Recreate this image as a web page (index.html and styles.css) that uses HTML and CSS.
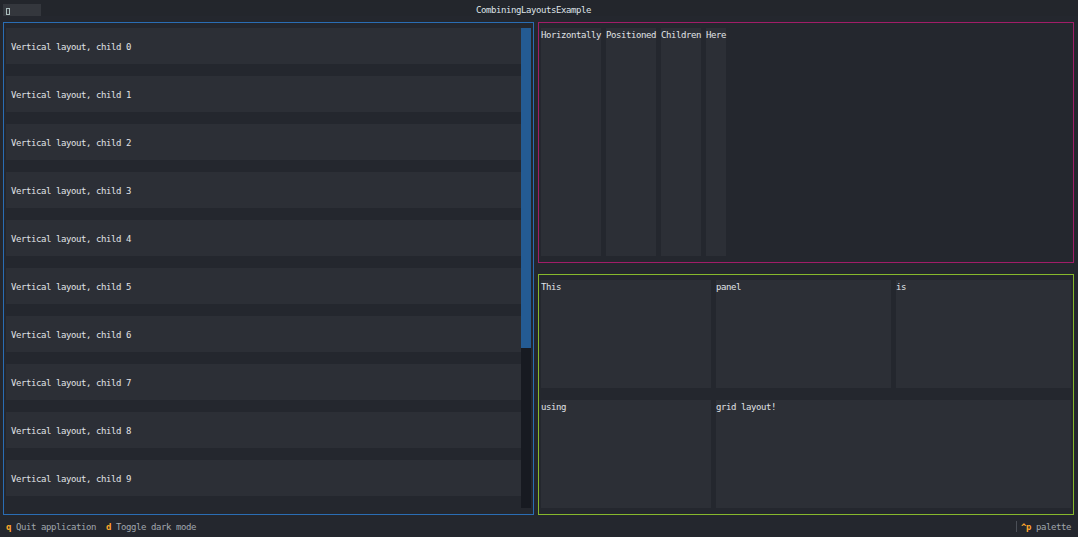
FILE: index.html
```html
<!DOCTYPE html>
<html>
<head>
<meta charset="utf-8">
<title>CombiningLayoutsExample</title>
<link rel="stylesheet" href="styles.css">
</head>
<body>
<div class="app">
  <header class="header">
    <div class="icon"><span class="icon-glyph"></span></div>
    <div class="title">CombiningLayoutsExample</div>
  </header>
  <main class="main">
    <section class="panel panel-left">
      <div class="list">
        <div class="item">Vertical layout, child 0</div>
        <div class="item">Vertical layout, child 1</div>
        <div class="item">Vertical layout, child 2</div>
        <div class="item">Vertical layout, child 3</div>
        <div class="item">Vertical layout, child 4</div>
        <div class="item">Vertical layout, child 5</div>
        <div class="item">Vertical layout, child 6</div>
        <div class="item">Vertical layout, child 7</div>
        <div class="item">Vertical layout, child 8</div>
        <div class="item">Vertical layout, child 9</div>
        <div class="item">Vertical layout, child 10</div>
        <div class="item">Vertical layout, child 11</div>
        <div class="item">Vertical layout, child 12</div>
        <div class="item">Vertical layout, child 13</div>
        <div class="item">Vertical layout, child 14</div>
      </div>
      <div class="scrollbar"><div class="thumb"></div></div>
    </section>
    <div class="right-col">
      <section class="panel panel-top">
        <div class="hchild">Horizontally</div>
        <div class="hchild">Positioned</div>
        <div class="hchild">Children</div>
        <div class="hchild">Here</div>
      </section>
      <section class="panel panel-grid">
        <div class="cell">This</div>
        <div class="cell">panel</div>
        <div class="cell">is</div>
        <div class="cell">using</div>
        <div class="cell cell-wide">grid layout!</div>
      </section>
    </div>
  </main>
  <footer class="footer">
    <div class="bindings"><span class="key"> q </span><span class="desc">Quit application </span><span class="key"> d </span><span class="desc">Toggle dark mode </span></div>
    <div class="palette"><span class="sep"></span><span class="key">^p</span><span class="desc"> palette </span></div>
  </footer>
</div>
</body>
</html>
```

FILE: styles.css
```css
html, body {
  margin: 0;
  padding: 0;
}

body {
  background: #24272e;
  color: #e0e3e7;
  font-family: "DejaVu Sans Mono", "Liberation Mono", monospace;
  font-size: 9px;
  letter-spacing: -0.42px;
  line-height: 14px;
  width: 1078px;
  height: 537px;
  overflow: hidden;
}

.app {
  width: 1078px;
  height: 537px;
  display: flex;
  flex-direction: column;
}

/* Header */
.header {
  height: 16px;
  flex: 0 0 16px;
  display: flex;
  align-items: flex-end;
  padding-left: 3px;
  background: #23262c;
  box-sizing: border-box;
}

.icon {
  width: 38px;
  height: 12px;
  background: #34373d;
  position: relative;
}

.icon-glyph {
  position: absolute;
  left: 3px;
  top: 4px;
  width: 2px;
  height: 5px;
  border: 1px solid #a9bcbc;
}

.title {
  margin-left: 435px;
  height: 12px;
  line-height: 12px;
  padding-top: 1px;
  white-space: pre;
  color: #dfe3e8;
}

/* Main */
.main {
  display: flex;
  height: 504px;
  flex: 0 0 504px;
  padding-left: 1px;
}

.panel {
  box-sizing: border-box;
  margin: 6px 2px 5px 2px;
  border: 1px solid;
  padding: 5px 2px 6px 2px;
}

.panel-left {
  flex: 0 0 531px;
  height: 493px;
  border-color: #2a6db4;
  display: flex;
}

.list {
  flex: 1;
  overflow: hidden;
  height: 480px;
}

.item {
  height: 36px;
  box-sizing: border-box;
  padding: 12px 5px 0 5px;
  margin-bottom: 12px;
  background: #2c2f36;
  white-space: pre;
  overflow: hidden;
}

.scrollbar {
  flex: 0 0 10px;
  height: 480px;
  background: #171a21;
}

.thumb {
  height: 320px;
  background: #245b93;
}

.right-col {
  flex: 0 0 540px;
  display: flex;
  flex-direction: column;
}

.panel-top {
  height: 241px;
  border-color: #a11d68;
  display: flex;
  gap: 5px;
}

.hchild {
  background: #2c2f36;
  white-space: pre;
}

.panel-grid {
  height: 241px;
  border-color: #87b82c;
  display: grid;
  grid-template-columns: 170px 175px 175px;
  grid-template-rows: 108px 108px;
  gap: 12px 5px;
}

.cell {
  background: #2c2f36;
  white-space: pre;
}

.cell-wide {
  grid-column: span 2;
}

/* Footer */
.footer {
  height: 17px;
  flex: 0 0 17px;
  box-sizing: border-box;
  display: flex;
  justify-content: space-between;
  padding: 1px 2px 0 1px;
  line-height: 12px;
}

.bindings,
.palette {
  display: flex;
  height: 12px;
  white-space: pre;
}

.key {
  color: #ffa62b;
  font-weight: bold;
}

.desc {
  color: #a0a6ad;
}

.sep {
  display: inline-block;
  width: 4px;
  height: 11px;
  border-left: 1px solid #4b4f57;
}
```
